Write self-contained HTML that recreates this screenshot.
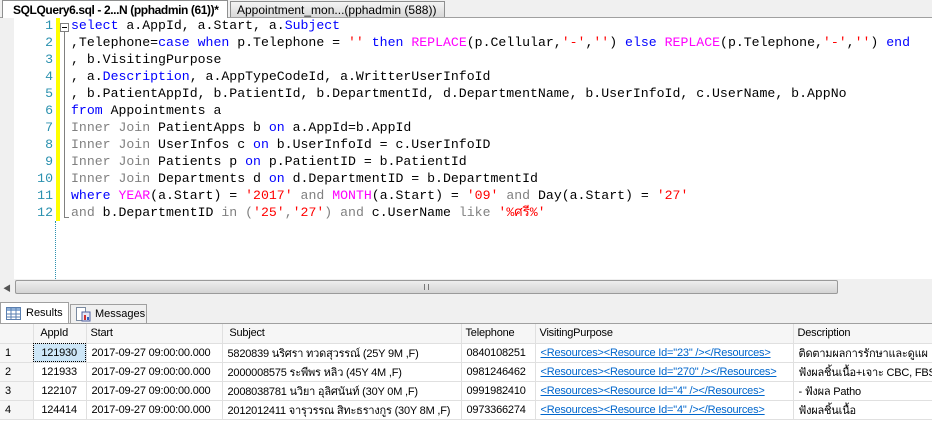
<!DOCTYPE html>
<html><head><meta charset="utf-8"><style>
*{margin:0;padding:0;box-sizing:border-box}
body{width:932px;height:424px;overflow:hidden;background:#f0f0f0;position:relative;font-family:"Liberation Sans","Noto Sans CJK SC",sans-serif}
.tabbar{position:absolute;left:0;top:0;width:932px;height:18px;background:#f0f0f0;border-bottom:1px solid #a0a0a0}
.t1{position:absolute;left:2px;top:0;height:18px;width:226px;background:#fff;border:1px solid #8e8f8f;border-bottom:none;font:bold 12px "Liberation Sans",sans-serif;letter-spacing:-0.4px;padding:2px 0 0 10px;color:#000;white-space:nowrap;overflow:hidden}
.t2{position:absolute;left:230px;top:1px;height:16px;width:215px;background:linear-gradient(#f4f4f4,#d8d8d8);border:1px solid #8e8f8f;border-bottom:none;font:12px "Liberation Sans",sans-serif;padding:1px 0 0 6px;white-space:nowrap;overflow:hidden}
.editor{position:absolute;left:0;top:18px;width:932px;height:261px;background:#fff}
.gut{position:absolute;left:0;top:0;width:14px;height:261px;background:#f0f0f0}
.yel{position:absolute;left:56px;top:0;width:4px;height:203px;background:#ffff00}
.dash{position:absolute;left:55px;top:203px;height:58px;border-left:1px dotted #2b91af}
.ln,.code{height:17px;line-height:17px;overflow:visible}
.ln{position:absolute;left:14px;width:39px;text-align:right;color:#2b91af;font-family:"Liberation Mono",monospace;font-size:13.2px}
.code{position:absolute;left:71px;white-space:pre;font-family:"Liberation Mono","Noto Sans CJK SC",monospace;font-size:13.2px;color:#000}
.k{color:#0000ff}.s{color:#ff0000}.f{color:#ff00ff}.g{color:#808080}
.box{position:absolute;left:60px;top:5px;width:9px;height:9px;border:1px solid #808080;background:#fff}
.box:after{content:"";position:absolute;left:1px;top:3px;width:5px;height:1px;background:#000}
.vl{position:absolute;left:64px;top:14px;width:1px;height:186px;background:#808080}
.hb{position:absolute;left:64px;top:199px;width:5px;height:1px;background:#808080}
.hs{position:absolute;left:0;top:279px;width:932px;height:17px;background:#f0f0f0}
.thumb{position:absolute;left:15px;top:1px;width:823px;height:14px;border:1px solid #9a9a9a;border-radius:2px;background:linear-gradient(#eee,#d4d4d4)}
.rt{position:absolute;left:0;top:302px;width:69px;height:21px;background:#fff;border:1px solid #a0a0a0;border-bottom:none;font-size:11px;padding:4px 0 0 25px}
.mt{position:absolute;left:70px;top:304px;width:77px;height:19px;background:#f0f0f0;border:1px solid #a0a0a0;border-bottom:none;font-size:11px;padding:3px 0 0 24px}
.grid{position:absolute;left:0;top:323px;width:932px;height:101px;background:#fff;border-top:1px solid #a0a0a0}
table{border-collapse:collapse;table-layout:fixed;width:932px;font:11px "Liberation Sans","Noto Sans CJK SC",sans-serif;letter-spacing:-0.2px;position:absolute;left:0;top:0}
td{height:19px;border-right:1px solid #e0e0e0;border-bottom:1px solid #e0e0e0;padding:0 0 0 5px;white-space:nowrap;overflow:hidden}
tr.h td{background:#f6f6f6;padding-left:4px}
td.rn{background:#f6f6f6}
a{color:#0066cc;text-decoration:underline}
.sel{background:#cde6f7;outline:1px dotted #000;outline-offset:-1px}
</style></head><body>
<div class="tabbar"><div class="t1">SQLQuery6.sql - 2...N (pphadmin (61))*</div><div class="t2">Appointment_mon...(pphadmin (588))</div></div>
<div class="editor">
<div class="gut"></div><div class="yel"></div><div class="dash"></div>
<div class="box"></div><div class="vl"></div><div class="hb"></div>
<div class="ln" style="top:-1px">1</div><div class="ln" style="top:16px">2</div><div class="ln" style="top:33px">3</div><div class="ln" style="top:50px">4</div><div class="ln" style="top:67px">5</div><div class="ln" style="top:84px">6</div><div class="ln" style="top:101px">7</div><div class="ln" style="top:118px">8</div><div class="ln" style="top:135px">9</div><div class="ln" style="top:152px">10</div><div class="ln" style="top:169px">11</div><div class="ln" style="top:186px">12</div>
<div class="code" style="top:-1px"><span class="k">select</span> a.AppId, a.Start, a.<span class="k">Subject</span></div>
<div class="code" style="top:16px">,Telephone=<span class="k">case when</span> p.Telephone = <span class="s">''</span> <span class="k">then</span> <span class="f">REPLACE</span>(p.Cellular,<span class="s">'-'</span>,<span class="s">''</span>) <span class="k">else</span> <span class="f">REPLACE</span>(p.Telephone,<span class="s">'-'</span>,<span class="s">''</span>) <span class="k">end</span></div>
<div class="code" style="top:33px">, b.VisitingPurpose</div>
<div class="code" style="top:50px">, a.<span class="k">Description</span>, a.AppTypeCodeId, a.WritterUserInfoId</div>
<div class="code" style="top:67px">, b.PatientAppId, b.PatientId, b.DepartmentId, d.DepartmentName, b.UserInfoId, c.UserName, b.AppNo</div>
<div class="code" style="top:84px"><span class="k">from</span> Appointments a</div>
<div class="code" style="top:101px"><span class="g">Inner Join</span> PatientApps b <span class="k">on</span> a.AppId=b.AppId</div>
<div class="code" style="top:118px"><span class="g">Inner Join</span> UserInfos c <span class="k">on</span> b.UserInfoId = c.UserInfoID</div>
<div class="code" style="top:135px"><span class="g">Inner Join</span> Patients p <span class="k">on</span> p.PatientID = b.PatientId</div>
<div class="code" style="top:152px"><span class="g">Inner Join</span> Departments d <span class="k">on</span> d.DepartmentID = b.DepartmentId</div>
<div class="code" style="top:169px"><span class="k">where</span> <span class="f">YEAR</span>(a.Start) = <span class="s">'2017'</span> <span class="g">and</span> <span class="f">MONTH</span>(a.Start) = <span class="s">'09'</span> <span class="g">and</span> Day(a.Start) = <span class="s">'27'</span></div>
<div class="code" style="top:186px"><span class="g">and</span> b.DepartmentID <span class="g">in</span> <span class="g">(</span><span class="s">'25'</span><span class="g">,</span><span class="s">'27'</span><span class="g">)</span> <span class="g">and</span> c.UserName <span class="g">like</span> <span class="s">'%ศรี%'</span></div>
</div>
<div class="hs"><div style="position:absolute;left:3px;top:4px;font-size:8px;color:#555">◀</div><div class="thumb"><div style="position:absolute;left:408px;top:3px;width:5px;height:6px;border-left:1px solid #777;border-right:1px solid #777"></div></div></div>
<div class="rt"><svg style="position:absolute;left:5px;top:4px" width="15" height="13"><rect x="0.5" y="0.5" width="14" height="12" fill="#fff" stroke="#5a7fb0"/><rect x="1" y="1" width="13" height="3" fill="#8fb0d8"/><path d="M5 1v12M10 1v12M1 7h13M1 10h13" stroke="#5a7fb0"/></svg>Results</div>
<div class="mt"><svg style="position:absolute;left:5px;top:2px" width="15" height="15"><rect x="0.5" y="0.5" width="9" height="13" fill="#fff" stroke="#7a8aa0"/><rect x="6" y="5" width="8" height="9" fill="#e6e6f6" stroke="#5060a0"/><rect x="8" y="8" width="2" height="5" fill="#d03030"/><rect x="11" y="10" width="2" height="3" fill="#3060c0"/></svg>Messages</div>
<div class="grid"><table>
<colgroup><col style="width:33px"><col style="width:53px"><col style="width:136px"><col style="width:239px"><col style="width:74px"><col style="width:258px"><col style="width:139px"></colgroup>
<tr class="h"><td></td><td>&nbsp;AppId</td><td>Start</td><td>&nbsp;Subject</td><td>Telephone</td><td>VisitingPurpose</td><td>Description</td></tr>
<tr><td class="rn">1</td><td class="sel">&nbsp;121930</td><td>2017-09-27 09:00:00.000</td><td>5820839 นริศรา ทวดสุวรรณ์ (25Y 9M ,F)</td><td>0840108251</td><td><a>&lt;Resources&gt;&lt;Resource Id="23" /&gt;&lt;/Resources&gt;</a></td><td>ติดตามผลการรักษาและดูแผ</td></tr>
<tr><td class="rn">2</td><td>&nbsp;121933</td><td>2017-09-27 09:00:00.000</td><td>2000008575 ระพีพร หลิว (45Y 4M ,F)</td><td>0981246462</td><td><a>&lt;Resources&gt;&lt;Resource Id="270" /&gt;&lt;/Resources&gt;</a></td><td>ฟังผลชิ้นเนื้อ+เจาะ CBC, FBS</td></tr>
<tr><td class="rn">3</td><td>&nbsp;122107</td><td>2017-09-27 09:00:00.000</td><td>2008038781 นวิยา อุลิศนันท์ (30Y 0M ,F)</td><td>0991982410</td><td><a>&lt;Resources&gt;&lt;Resource Id="4" /&gt;&lt;/Resources&gt;</a></td><td>- ฟังผล Patho</td></tr>
<tr><td class="rn">4</td><td>&nbsp;124414</td><td>2017-09-27 09:00:00.000</td><td>2012012411 จารุวรรณ สิทะธรางกูร (30Y 8M ,F)</td><td>0973366274</td><td><a>&lt;Resources&gt;&lt;Resource Id="4" /&gt;&lt;/Resources&gt;</a></td><td>ฟังผลชิ้นเนื้อ</td></tr>
</table></div>
</body></html>
